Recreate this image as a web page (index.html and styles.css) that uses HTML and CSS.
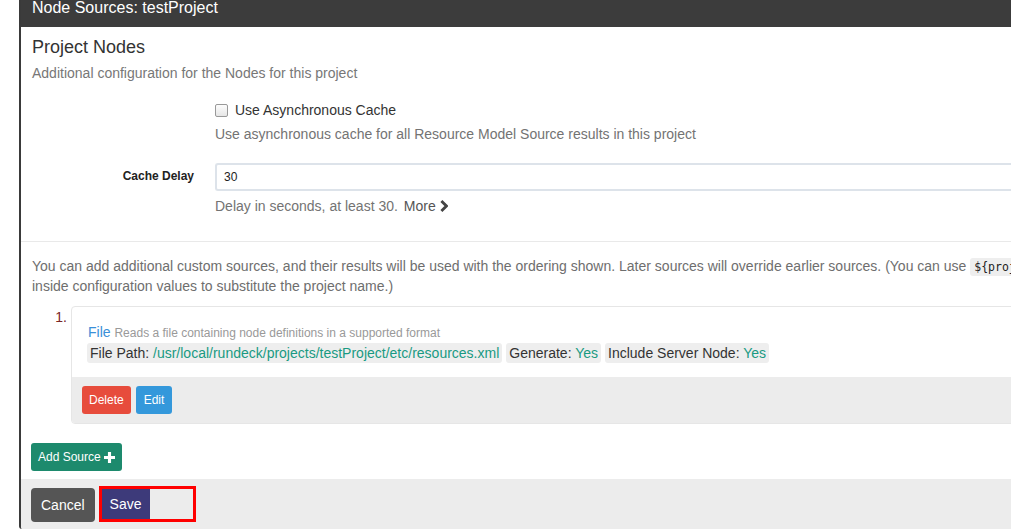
FILE: index.html
```html
<!DOCTYPE html>
<html>
<head>
<meta charset="utf-8">
<link rel="stylesheet" href="styles.css">
</head>
<body>
<div class="panel">
  <div class="panel-heading">Node Sources: testProject</div>
  <div class="section">
    <h3 class="title">Project Nodes</h3>
    <div class="muted">Additional configuration for the Nodes for this project</div>
    <div class="form-row check-row">
      <div class="label-col"></div>
      <div class="field-col">
        <label class="check"><span class="box"></span>Use Asynchronous Cache</label>
        <div class="help">Use asynchronous cache for all Resource Model Source results in this project</div>
      </div>
    </div>
    <div class="form-row input-row">
      <div class="label-col"><label class="lbl">Cache Delay</label></div>
      <div class="field-col">
        <div class="input">30</div>
        <div class="help help2">Delay in seconds, at least 30. <span class="more">More <svg class="chev" viewBox="0 0 8 12" width="8" height="12"><path d="M1.4 1 L6.4 6 L1.4 11" fill="none" stroke="#444" stroke-width="2.8"/></svg></span></div>
      </div>
    </div>
  </div>
  <div class="section sources">
    <p class="intro">You can add additional custom sources, and their results will be used with the ordering shown. Later sources will override earlier sources. (You can use <code>${project}</code> inside configuration values to substitute the project name.)</p>
    <div class="src">
      <div class="src-num">1.</div>
      <div class="card">
        <div class="card-body">
          <div class="prov"><span class="prov-name">File</span> <span class="prov-desc">Reads a file containing node definitions in a supported format</span></div>
          <div class="chips">
            <span class="chip">File Path: <span class="val">/usr/local/rundeck/projects/testProject/etc/resources.xml</span></span>
            <span class="chip">Generate: <span class="val">Yes</span></span>
            <span class="chip">Include Server Node: <span class="val">Yes</span></span>
          </div>
        </div>
        <div class="card-footer">
          <span class="btn btn-danger">Delete</span>
          <span class="btn btn-info">Edit</span>
        </div>
      </div>
    </div>
    <span class="btn btn-success add">Add Source <svg class="plus" viewBox="0 0 12 12" width="11" height="11"><path d="M4.3 0h3.4v4.3H12v3.4H7.7V12H4.3V7.7H0V4.3h4.3z" fill="#fff"/></svg></span>
  </div>
  <div class="footer">
    <span class="btn btn-default">Cancel</span>
    <span class="highlight"><span class="btn btn-primary">Save</span></span>
  </div>
</div>
</body>
</html>
```
FILE: styles.css
```css
html, body {
  margin: 0;
  padding: 0;
  background: #fff;
  overflow: hidden;
}
body {
  font-family: "Liberation Sans", Arial, sans-serif;
  font-size: 14px;
  color: #333;
  width: 1011px;
  height: 530px;
}
.panel {
  width: 1060px;
  margin-left: 19px;
  border-left: 2px solid #3a3a3a;
  height: 529px;
  border-bottom-left-radius: 3px;
  overflow: hidden;
}
.panel-heading {
  height: 29px;
  line-height: 20px;
  background: #3c3c3c;
  color: #fff;
  font-size: 16px;
  padding: 0 11px;
  box-sizing: border-box;
  margin-top: -2px;
}
.section {
  padding: 0 11px;
}
.title {
  margin: 9px 0 0;
  font-size: 18px;
  font-weight: normal;
  line-height: 22px;
  color: #333;
}
.muted {
  color: #777;
  line-height: 20px;
  margin-top: 5px;
}
.form-row {
  display: flex;
}
.label-col {
  width: 162px;
  text-align: right;
  padding-right: 21px;
  flex: none;
}
.field-col {
  flex: 1;
}
.check-row {
  margin-top: 17px;
}
.check {
  display: flex;
  align-items: center;
  line-height: 20px;
  color: #333;
}
.box {
  width: 11px;
  height: 11px;
  border: 1px solid #999;
  border-radius: 2px;
  background: linear-gradient(#fdfdfd, #e6e6e6);
  margin-right: 7px;
  margin-left: 0;
}
.help {
  color: #737373;
  line-height: 20px;
  margin-top: 4px;
}
.input-row {
  margin-top: 19px;
}
.lbl {
  display: block;
  font-size: 12px;
  font-weight: bold;
  line-height: 26px;
  color: #222;
}
.input {
  height: 28px;
  box-sizing: border-box;
  border: 2px solid #dde3ea;
  border-right: none;
  border-radius: 3px 0 0 3px;
  padding: 0 7px;
  font-size: 12px;
  line-height: 24px;
  color: #222;
}
.help2 {
  margin-top: 5px;
}
.more {
  color: #555;
  margin-left: 2px;
}
.chev {
  vertical-align: -1px;
}
.sources {
  border-top: 1px solid #e9e9e9;
  margin-top: 25px;
  padding-top: 15px;
}
.intro {
  margin: 0;
  line-height: 19px;
  color: #6e6e6e;
}
code {
  font-family: "DejaVu Sans Mono", "Liberation Mono", monospace;
  font-size: 11.5px;
  background: #eee;
  color: #222;
  padding: 2px 4px;
  border-radius: 3px;
}
.src {
  display: flex;
  margin-top: 10px;
}
.src-num {
  width: 35px;
  padding-right: 4px;
  text-align: right;
  color: #7a2626;
  line-height: 22px;
  flex: none;
}
.card {
  flex: 1;
  border: 1px solid #e6e6e6;
  border-radius: 4px;
  overflow: hidden;
}
.card-body {
  padding: 16px 16px 14px;
}
.prov {
  line-height: 18px;
}
.prov-name {
  color: #3a8fd8;
  font-size: 14px;
}
.prov-desc {
  color: #999;
  font-size: 12px;
}
.chips {
  margin-top: 1px;
  display: flex;
  gap: 4px;
  margin-left: -1px;
}
.chip {
  background: #eee;
  border-radius: 3px;
  padding: 0 3px;
  line-height: 20px;
  color: #333;
}
.val {
  color: #199a82;
}
.card-footer {
  background: #ececec;
  padding: 9px 10px;
  display: flex;
  gap: 5px;
}
.btn {
  display: inline-flex;
  align-items: center;
  box-sizing: border-box;
  color: #fff;
  border-radius: 3px;
  font-size: 12px;
}
.btn-danger {
  background: #e74c3c;
  height: 28px;
  padding: 0 7px;
}
.btn-info {
  background: #3498db;
  height: 28px;
  padding: 0 8px;
}
.add {
  margin-top: 19px;
  margin-left: -1px;
  background: #1d8a6d;
  height: 28px;
  padding: 0 7px;
}
.plus {
  margin-left: 3px;
}
.footer {
  margin-top: 8px;
  background: #ececec;
  padding: 9px 10px 10px;
  display: flex;
  align-items: flex-start;
  gap: 4px;
}
.btn-default {
  background: #555;
  height: 34px;
  padding: 0 10px;
  font-size: 14px;
  border-radius: 4px;
}
.highlight {
  display: block;
  width: 97px;
  height: 36px;
  box-sizing: border-box;
  border: 3px solid #f00;
  margin-top: -2px;
}
.btn-primary {
  background: #3d3a7a;
  height: 30px;
  padding: 0 8px;
  font-size: 14px;
  border-radius: 0;
}
```
